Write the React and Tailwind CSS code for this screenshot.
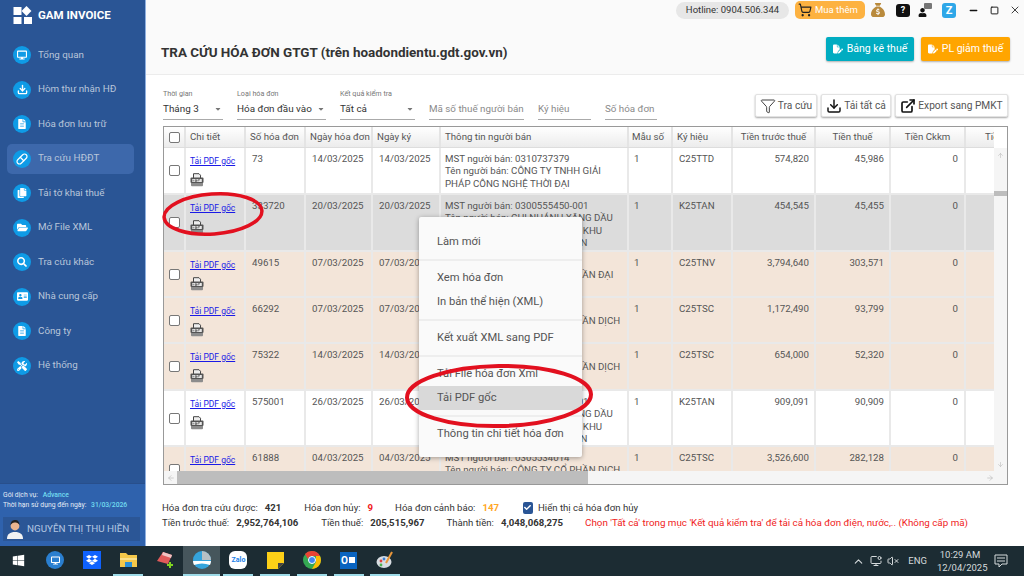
import React from "react";
import {
  FaDesktop, FaFileAlt, FaCopy, FaFolderOpen, FaSearch, FaAddressCard, FaTools, FaCheck,
  FaWindows, FaDropbox, FaUser, FaCaretDown,
} from "react-icons/fa";
import { FaSackDollar, FaFilePen } from "react-icons/fa6";
import { Filter, Download, ExternalLink, Minus, Square, X, ChevronUp, ArrowUp, ArrowDown, ArrowLeft, ArrowRight, VolumeX, MonitorDot, ShoppingCart, Pill } from "lucide-react";

const menu = [
  { label: "Tổng quan", icon: <FaDesktop size={10} /> },
  { label: "Hòm thư nhận HĐ", icon: <Download size={11} strokeWidth={3} /> },
  { label: "Hóa đơn lưu trữ", icon: <FaFileAlt size={10} /> },
  { label: "Tra cứu HĐĐT", icon: <Pill size={12} strokeWidth={2.4} />, active: true },
  { label: "Tải tờ khai thuế", icon: <FaCopy size={10} /> },
  { label: "Mở File XML", icon: <FaFolderOpen size={11} /> },
  { label: "Tra cứu khác", icon: <FaSearch size={10} /> },
  { label: "Nhà cung cấp", icon: <FaAddressCard size={11} /> },
  { label: "Công ty", icon: <FaFileAlt size={10} /> },
  { label: "Hệ thống", icon: <FaTools size={10} /> },
];

const rows = [
  { h: "h-[47px]", bg: "bg-white", no: "73", date: "14/03/2025", info: ["MST người bán: 0310737379", "Tên người bán: CÔNG TY TNHH GIẢI", "PHÁP CÔNG NGHỆ THỜI ĐẠI"], code: "C25TTD", pre: "574,820", tax: "45,986" },
  { h: "h-[57px]", bg: "bg-[#dcdcdc]", no: "333720", date: "20/03/2025", info: ["MST người bán: 0300555450-001", "Tên người bán: CHI NHÁNH XĂNG DẦU", "TÂY NINH-CÔNG TY XĂNG DẦU KHU", "VỰC II - TNHH MỘT THÀNH VIÊN"], code: "K25TAN", pre: "454,545", tax: "45,455" },
  { h: "h-[46px]", bg: "bg-[#f3e5d9]", no: "49615", date: "07/03/2025", info: ["MST người bán: 0305534014", "Tên người bán: CÔNG TY CỔ PHẦN ĐẠI", "VIỆT"], code: "C25TNV", pre: "3,794,640", tax: "303,571" },
  { h: "h-[46px]", bg: "bg-[#f3e5d9]", no: "66292", date: "07/03/2025", info: ["MST người bán: 0305534014", "Tên người bán: CÔNG TY CỔ PHẦN DỊCH", "VỤ MIỀN NAM"], code: "C25TSC", pre: "1,172,490", tax: "93,799" },
  { h: "h-[47px]", bg: "bg-[#f3e5d9]", no: "75322", date: "14/03/2025", info: ["MST người bán: 0305534014", "Tên người bán: CÔNG TY CỔ PHẦN DỊCH", "VỤ MIỀN NAM"], code: "C25TSC", pre: "654,000", tax: "52,320" },
  { h: "h-[56px]", bg: "bg-white", no: "575001", date: "26/03/2025", info: ["MST người bán: 0300555450-001", "Tên người bán: CHI NHÁNH XĂNG DẦU", "TÂY NINH-CÔNG TY XĂNG DẦU KHU", "VỰC II - TNHH MỘT THÀNH VIÊN"], code: "K25TAN", pre: "909,091", tax: "90,909" },
  { h: "h-[47px]", bg: "bg-[#f3e5d9]", no: "61888", date: "04/03/2025", info: ["MST người bán: 0305534014", "Tên người bán: CÔNG TY CỔ PHẦN DỊCH", "VỤ MIỀN NAM"], code: "C25TSC", pre: "3,526,600", tax: "282,128" },
];

function Checkbox() {
  return <span className="block w-[11px] h-[11px] rounded-[2px] border border-[#777] bg-white" />;
}

function PdfPrinter() {
  return (
    <svg width="14" height="14" viewBox="0 0 14 14" className="block">
      <path d="M3.5 5V.7h5.5l1.5 1.5V5" fill="#eee" stroke="#444" strokeWidth="1" />
      <rect x=".5" y="4.5" width="13" height="5.5" rx="1" fill="#555" />
      <rect x="2.2" y="6" width="9.6" height="3" fill="#e8e8e8" />
      <path d="M3.2 6.8v1.6M5.2 6.8h1.4v1.6H5.2zM8 6.8h2M8 6.8v1.6" stroke="#444" strokeWidth=".7" fill="none" />
      <path d="M1 10h12v2.3a1 1 0 0 1-1 1H2a1 1 0 0 1-1-1z" fill="#8c8c8c" />
    </svg>
  );
}

function Cell({ className = "", children }) {
  return <div className={`shrink-0 border-r-2 border-[#e9e9e9] ${className}`}>{children}</div>;
}

function Row({ r }) {
  return (
    <div className={`flex shrink-0 border-b-2 border-[#e9e9e9] overflow-hidden ${r.h} ${r.bg}`}>
      <Cell className="w-[22px] flex items-center justify-center"><Checkbox /></Cell>
      <Cell className="w-[60px] pl-[4px] pt-[7px]">
        <a className="block text-[8.5px] leading-[12px] text-[#1a1ae6] underline">Tải PDF gốc</a>
        <div className="mt-[6px]"><PdfPrinter /></div>
      </Cell>
      <Cell className="w-[60px] pl-[6px] pt-[5px]">{r.no}</Cell>
      <Cell className="w-[67px] pl-[6px] pt-[5px]">{r.date}</Cell>
      <Cell className="w-[68px] pl-[6px] pt-[5px]">{r.date}</Cell>
      <Cell className="w-[188px] pl-[4px] pt-[5px] whitespace-nowrap overflow-hidden">
        {r.info.map((t) => <div key={t}>{t}</div>)}
      </Cell>
      <Cell className="w-[44px] pl-[5px] pt-[5px]">1</Cell>
      <Cell className="w-[60px] pl-[6px] pt-[5px]">{r.code}</Cell>
      <Cell className="w-[83px] pr-[5px] pt-[5px] text-right">{r.pre}</Cell>
      <Cell className="w-[75px] pr-[5px] pt-[5px] text-right">{r.tax}</Cell>
      <Cell className="w-[75px] pr-[6px] pt-[5px] text-right">0</Cell>
      <div className="flex-1" />
    </div>
  );
}

function HeadCell({ className = "", children }) {
  return <div className={`shrink-0 flex items-center border-r-2 border-[#e4e4e4] ${className}`}>{children}</div>;
}

function Select({ label, value, width }) {
  return (
    <div className={`${width} border-b border-[#aaa] h-[31px] shrink-0`}>
      <div className="text-[7.2px] leading-[10px] text-[#777] whitespace-nowrap">{label}</div>
      <div className="flex items-center justify-between text-[9.9px] leading-[19px] text-[#333] whitespace-nowrap">
        {value}
        <FaCaretDown size={8} className="text-[#777] mr-[1px]" />
      </div>
    </div>
  );
}

function Field({ label, width }) {
  return (
    <div className={`${width} border-b border-[#aaa] h-[20px] self-end shrink-0 text-[9.8px] leading-[17px] text-[#8a8a8a] whitespace-nowrap`}>
      {label}
    </div>
  );
}

function ToolBtn({ icon, label, width }) {
  return (
    <button className={`${width} h-[23px] flex items-center justify-center gap-[2px] bg-white border border-[#e2e2e2] shadow-[0_1px_2px_rgba(0,0,0,0.35)] rounded-[2px] text-[10.2px] text-[#555] whitespace-nowrap`}>
      {icon}
      {label}
    </button>
  );
}

function TaskIcon({ children, active, lined }) {
  return (
    <div className={`h-[30px] shrink-0 flex items-center justify-center border-b-2 ${active ? "w-[36.7px] bg-[#46565c]" : "w-[30px] mx-[3.35px]"} ${lined ? "border-[#9edbe8]" : "border-transparent"}`}>
      {children}
    </div>
  );
}

export default function App() {
  return (
    <div className="relative w-[1024px] h-[576px] overflow-hidden flex flex-col bg-white font-['Roboto',sans-serif]">
      <div className="flex h-[546px]">
        {/* Sidebar */}
        <aside className="w-[146px] shrink-0 bg-[#2a5595] border-r border-[#8fb0e0] flex flex-col">
          <div className="h-[31px] flex items-center pl-[13px] gap-[5px]">
            <svg width="20" height="20" viewBox="0 0 20 20">
              <rect x="0.5" y="1" width="8" height="8" fill="#fff" />
              <rect x="10" y="1.5" width="7" height="7" fill="#fff" transform="rotate(45 13.5 5)" />
              <rect x="0.5" y="11" width="8" height="7" fill="#fff" />
              <rect x="11" y="11" width="8" height="7" fill="#fff" />
            </svg>
            <span className="text-[11.5px] font-bold text-white whitespace-nowrap">GAM INVOICE</span>
          </div>
          <nav className="flex flex-col pl-[7px] pr-[11px] pt-[9px] gap-[4.5px]">
            {menu.map((m) => (
              <div key={m.label} className={`h-[30px] flex items-center pl-[6px] gap-[7px] rounded-[5px] ${m.active ? "bg-[#3d68ab]" : ""}`}>
                <span className="w-[18px] h-[18px] rounded-full bg-[#0f9be6] text-white flex items-center justify-center shrink-0">{m.icon}</span>
                <span className="text-[9.8px] text-[#b9c6da] whitespace-nowrap">{m.label}</span>
              </div>
            ))}
          </nav>
          <div className="mt-auto h-[63px] bg-[#2f62ad] border-t border-[#284f8c] pt-[7px] px-[3px]">
            <div className="text-[6.8px] leading-[9.5px] text-[#e4ecf6] whitespace-nowrap">
              Gói dịch vụ: <span className="ml-[3px] font-medium text-[#72dcf0]">Advance</span>
            </div>
            <div className="text-[6.8px] leading-[9.5px] text-[#e4ecf6] whitespace-nowrap">
              Thời hạn sử dụng đến ngày: <span className="ml-[3px] font-medium text-[#72dcf0]">31/03/2026</span>
            </div>
            <div className="mt-[7px] h-[24px] w-[137px] bg-[#2b5696] flex items-center pl-[3px] gap-[3px]">
              <svg width="18" height="20" viewBox="0 0 18 20" className="shrink-0">
                <path d="M1 20c0-5 3-7 8-7s8 2 8 7z" fill="#f2f2f2" />
                <circle cx="9" cy="7" r="4.4" fill="#eab48f" />
                <path d="M4.5 6.5C4.5 2 7 1 9.5 1s4 2 4 5c-1-2-3-2.500-5-2.500-1.500 0-3 1-4 2.500z" fill="#222" />
              </svg>
              <span className="text-[9.8px] text-[#b4c6e2] whitespace-nowrap">NGUYỄN THỊ THU HIỀN</span>
            </div>
          </div>
        </aside>

        {/* Main */}
        <main className="flex-1 min-w-0 flex flex-col">
          <header className="h-[75px] shrink-0 bg-[#fafafa] border-b border-[#ececec] relative flex items-end justify-between pl-[15px] pr-[14px] pb-[11px]">
            <h1 className="text-[13.45px] leading-[20px] font-bold text-[#333] whitespace-nowrap">
              TRA CỨU HÓA ĐƠN GTGT (trên hoadondientu.gdt.gov.vn)
            </h1>
            <div className="flex gap-[7px] mb-[2px]">
              <button className="w-[88px] h-[24px] bg-[#00acc1] rounded-[2px] shadow-[0_1px_2px_rgba(0,0,0,0.3)] text-white text-[10.5px] flex items-center justify-center gap-[4px] whitespace-nowrap"><FaFilePen size={10} />Bảng kê thuế</button>
              <button className="w-[89px] h-[24px] bg-[#ffa500] rounded-[2px] shadow-[0_1px_2px_rgba(0,0,0,0.3)] text-white text-[10.5px] flex items-center justify-center gap-[4px] whitespace-nowrap"><FaFilePen size={10} />PL giảm thuế</button>
            </div>
            <div className="absolute top-[1px] right-[3px] flex items-center">
              <span className="w-[113px] h-[17px] rounded-full bg-[#e7e7e7] text-[9.5px] text-[#333] flex items-center justify-center whitespace-nowrap">Hotline: 0904.506.344</span>
              <span className="ml-[6px] w-[70px] h-[18px] rounded-[5px] bg-[#fdb241] flex items-center pl-[3px] gap-[3px] text-[9.5px] text-white whitespace-nowrap"><ShoppingCart size={14} className="text-[#222]" />Mua thêm</span>
              <FaSackDollar size={14} className="ml-[6px] text-[#b98a3c]" />
              <span className="ml-[11px] w-[14px] h-[13px] rounded-[3px] bg-[#111] text-white text-[9px] leading-[13px] font-bold text-center">?</span>
              <span className="ml-[8px] w-[14px] h-[14px] relative text-[#111]">
                <FaUser size={9} className="absolute left-0 bottom-0" />
                <span className="absolute right-0 top-0 w-[8px] h-[6px] rounded-[1px] bg-[#777]" />
              </span>
              <span className="ml-[10px] w-[14px] h-[15px] rounded-[3px] bg-[#2ea7e8] text-white text-[11px] leading-[15px] font-bold text-center">Z</span>
              <Minus size={11} strokeWidth={3} className="ml-[12px] text-[#111]" />
              <Square size={9} strokeWidth={2.5} className="ml-[11px] text-[#111]" />
              <X size={12} strokeWidth={1.6} className="ml-[10px] text-[#111]" />
            </div>
          </header>

          <section className="flex-1 min-h-0 flex flex-col pl-[17px] pr-[16px]">
            {/* Filters */}
            <div className="h-[51px] shrink-0 flex items-start pt-[13px]">
              <div className="flex gap-[14px] pt-[1px]">
                <Select label="Thời gian" value="Tháng 3" width="w-[60px]" />
                <Select label="Loại hóa đơn" value="Hóa đơn đầu vào" width="w-[89px]" />
                <Select label="Kết quả kiểm tra" value="Tất cả" width="w-[75px]" />
                <Field label="Mã số thuế người bán" width="w-[95px]" />
                <Field label="Ký hiệu" width="w-[53px]" />
                <Field label="Số hóa đơn" width="w-[52px]" />
              </div>
              <div className="ml-auto flex gap-[4px] mt-[6px]">
                <ToolBtn icon={<Filter size={16} strokeWidth={1.4} className="text-[#333]" />} label="Tra cứu" width="w-[62px]" />
                <ToolBtn icon={<Download size={16} strokeWidth={2.2} className="text-[#111]" />} label="Tải tất cả" width="w-[70px]" />
                <ToolBtn icon={<ExternalLink size={16} strokeWidth={2.5} className="text-[#111]" />} label="Export sang PMKT" width="w-[113px]" />
              </div>
            </div>

            {/* Table */}
            <div className="h-[359px] shrink-0 border border-[#999] flex flex-col overflow-hidden">
              <div className="flex-1 min-h-0 flex">
                <div className="flex-1 min-w-0 flex flex-col overflow-hidden text-[9.7px] leading-[12.4px] text-[#555]">
                  <div className="h-[21px] shrink-0 flex bg-gradient-to-b from-white to-[#ececec] border-b border-[#ddd] text-[#555]">
                    <HeadCell className="w-[22px] justify-center"><Checkbox /></HeadCell>
                    <HeadCell className="w-[60px] pl-[4px]">Chi tiết</HeadCell>
                    <HeadCell className="w-[60px] pl-[4px]">Số hóa đơn</HeadCell>
                    <HeadCell className="w-[67px] pl-[4px] whitespace-nowrap">Ngày hóa đơn</HeadCell>
                    <HeadCell className="w-[68px] pl-[4px]">Ngày ký</HeadCell>
                    <HeadCell className="w-[188px] pl-[4px] whitespace-nowrap">Thông tin người bán</HeadCell>
                    <HeadCell className="w-[44px] pl-[3px] whitespace-nowrap">Mẫu số</HeadCell>
                    <HeadCell className="w-[60px] pl-[4px]">Ký hiệu</HeadCell>
                    <HeadCell className="w-[83px] justify-center whitespace-nowrap">Tiền trước thuế</HeadCell>
                    <HeadCell className="w-[75px] justify-center whitespace-nowrap">Tiền thuế</HeadCell>
                    <HeadCell className="w-[75px] justify-center whitespace-nowrap">Tiền Ckkm</HeadCell>
                    <div className="flex-1 flex items-center pl-[19px] overflow-hidden whitespace-nowrap">Tiền</div>
                  </div>
                  {rows.map((r) => <Row key={r.no} r={r} />)}
                </div>
                <div className="w-[13px] shrink-0 bg-[#f5f5f5] flex flex-col items-center mt-[21px]">
                  <ArrowUp size={7} className="mt-[4px] text-[#bbb]" />
                  <div className="mt-[32px] w-full h-[5px] bg-[#bdbdbd]" />
                  <ArrowDown size={7} className="mt-auto mb-[3px] text-[#bbb]" />
                </div>
              </div>
              <div className="h-[13px] shrink-0 flex items-center bg-[#f5f5f5]">
                <span className="w-[13px] flex justify-center"><ArrowLeft size={8} className="text-[#bbb]" /></span>
                <div className="w-[411px] h-full bg-[#bdbdbd]" />
                <span className="ml-auto mr-[13px] flex justify-center"><ArrowRight size={8} className="text-[#bbb]" /></span>
              </div>
            </div>

            {/* Summary */}
            <div className="pt-[15px] -ml-[1px] text-[9.6px] leading-[15px] text-[#333] whitespace-nowrap">
              <div className="flex items-center">
                <span>Hóa đơn tra cứu được:</span><b className="ml-[7px] font-bold">421</b>
                <span className="ml-[23px]">Hóa đơn hủy:</span><b className="ml-[7px] font-bold text-[#f02020]">9</b>
                <span className="ml-[22px]">Hóa đơn cảnh báo:</span><b className="ml-[7px] font-bold text-[#ffa726]">147</b>
                <span className="ml-[24px] w-[10px] h-[12px] rounded-[2px] bg-[#2a5595] text-white flex items-center justify-center"><FaCheck size={7} /></span>
                <span className="ml-[5px]">Hiển thị cả hóa đơn hủy</span>
              </div>
              <div className="flex items-center">
                <span>Tiền trước thuế:</span><b className="ml-[7px] font-bold">2,952,764,106</b>
                <span className="ml-[23px]">Tiền thuế:</span><b className="ml-[7px] font-bold">205,515,967</b>
                <span className="ml-[22px]">Thành tiền:</span><b className="ml-[7px] font-bold">4,048,068,275</b>
                <span className="ml-[22px] text-[#f01c1c] text-[9.8px]">Chọn 'Tất cả' trong mục 'Kết quả kiểm tra' để tải cả hóa đơn điện, nước,.. (Không cấp mã)</span>
              </div>
            </div>
          </section>
        </main>
      </div>

      {/* Taskbar */}
      <footer className="h-[30px] shrink-0 bg-[#1c2c33] flex items-center">
        <TaskIcon><FaWindows size={13} className="text-white" /></TaskIcon>
        <TaskIcon><span className="w-[18px] h-[18px] rounded-full bg-[#2a7fd0] flex items-center justify-center text-white"><FaDesktop size={9} /></span></TaskIcon>
        <TaskIcon><span className="w-[18px] h-[18px] bg-[#0f62fe] flex items-center justify-center text-white"><FaDropbox size={12} /></span></TaskIcon>
        <TaskIcon lined><svg width="17" height="16" viewBox="0 0 17 16"><path d="M0 1h6l2 2h9v12H0z" fill="#f4c84a" /><path d="M0 6h17v2H0z" fill="#fbe08a" /><rect x="5" y="10" width="7" height="5" fill="#2a8fd8" /></svg></TaskIcon>
        <TaskIcon><svg width="18" height="18" viewBox="0 0 18 18"><path d="M7 1l9 3-4 9-11-3z" fill="#e05a5a" /><path d="M7 1l9 3-1 3-9-3z" fill="#f0c4c4" /><path d="M11 14h6M14 11v6" stroke="#7ed321" strokeWidth="2" /></svg></TaskIcon>
        <TaskIcon active lined>
          <svg width="18" height="18" viewBox="0 0 18 18"><circle cx="9" cy="9" r="9" fill="#35a4dc" /><path d="M9 9V0a9 9 0 0 1 9 9z" fill="#b9c0c4" /><path d="M0 10h18a9 9 0 0 1-1 4q-8-3-16 0a9 9 0 0 1-1-4z" fill="#fff" /></svg>
        </TaskIcon>
        <TaskIcon lined><span className="w-[18px] h-[18px] rounded-[6px] bg-white flex items-center justify-center text-[7px] leading-none font-bold text-[#1a7fe8]">Zalo</span></TaskIcon>
        <TaskIcon lined><svg width="17" height="17" viewBox="0 0 17 17"><path d="M0 0h17v11l-6 6H0z" fill="#fdd017" /><path d="M11 17v-6h6z" fill="#444" /></svg></TaskIcon>
        <TaskIcon lined><svg width="18" height="18" viewBox="0 0 18 18"><circle cx="9" cy="9" r="9" fill="#34a853" /><path d="M9 0a9 9 0 0 1 8 5H9a4 4 0 0 0-4 3L2 3a9 9 0 0 1 7-3z" fill="#ea4335" /><path d="M17 5a9 9 0 0 1-8 13l4-7V5z" fill="#fbbc05" /><circle cx="9" cy="9" r="3.5" fill="#4285f4" stroke="#fff" /></svg></TaskIcon>
        <TaskIcon lined><span className="w-[17px] h-[17px] bg-[#0a64c0] flex items-center text-[10px] font-bold text-white pl-[1px]">O<span className="ml-[1px] w-[6px] h-[6px] bg-white" /></span></TaskIcon>
        <TaskIcon lined><svg width="18" height="18" viewBox="0 0 18 18"><ellipse cx="8" cy="11" rx="7.500" ry="6" fill="#d8dde2" /><circle cx="5" cy="10" r="1.400" fill="#e04040" /><circle cx="8" cy="8" r="1.400" fill="#3a7fd5" /><circle cx="5" cy="14" r="1.400" fill="#4caf50" /><path d="M10 12L16 1" stroke="#e8963a" strokeWidth="2" /></svg></TaskIcon>
        <div className="ml-auto flex items-center text-[#d5dadc] text-[9.5px] whitespace-nowrap">
          <ChevronUp size={13} />
          <MonitorDot size={12} className="ml-[5px]" />
          <VolumeX size={12} className="ml-[5px]" />
          <span className="ml-[9px]">ENG</span>
          <div className="ml-[10px] w-[46px] text-center leading-[13px]"><div>10:29 AM</div><div>12/04/2025</div></div>
          <svg width="14" height="14" viewBox="0 0 14 14" className="ml-[11px] mr-[16px]"><path d="M1 1h12v9H8l-3 3v-3H1z" fill="none" stroke="#d5dadc" /><path d="M3 4h8M3 7h8" stroke="#d5dadc" /></svg>
        </div>
      </footer>

      {/* Context menu */}
      <div className="absolute left-[419px] top-[217px] w-[163px] h-[240px] bg-[#fafafa] rounded-[2px] shadow-[0_1px_5px_rgba(0,0,0,0.35)] pt-[13px] text-[11.2px] text-[#555] whitespace-nowrap">
        <div className="h-[24px] pl-[18px] flex items-center">Làm mới</div>
        <div className="my-[5px] h-[2px] bg-[#eeeeee]" />
        <div className="h-[24px] pl-[18px] flex items-center">Xem hóa đơn</div>
        <div className="h-[24px] pl-[18px] flex items-center">In bản thể hiện (XML)</div>
        <div className="my-[5px] h-[2px] bg-[#eeeeee]" />
        <div className="h-[24px] pl-[18px] flex items-center">Kết xuất XML sang PDF</div>
        <div className="my-[5px] h-[2px] bg-[#eeeeee]" />
        <div className="h-[24px] pl-[18px] flex items-center">Tải File hóa đơn Xml</div>
        <div className="h-[24px] pl-[18px] flex items-center bg-[#d9d9d9]">Tải PDF gốc</div>
        <div className="my-[5px] h-[2px] bg-[#eeeeee]" />
        <div className="h-[24px] pl-[18px] flex items-center">Thông tin chi tiết hóa đơn</div>
      </div>

      {/* Red hand-drawn marks */}
      <svg className="absolute inset-0 pointer-events-none" width="1024" height="576" viewBox="0 0 1024 576">
        <ellipse cx="213" cy="214" rx="49" ry="20" fill="none" stroke="#e2101f" strokeWidth="3.5" transform="rotate(-4 213 214)" />
        <ellipse cx="499" cy="396" rx="92" ry="30" fill="none" stroke="#e2101f" strokeWidth="4" transform="rotate(-1 499 396)" />
      </svg>
    </div>
  );
}
